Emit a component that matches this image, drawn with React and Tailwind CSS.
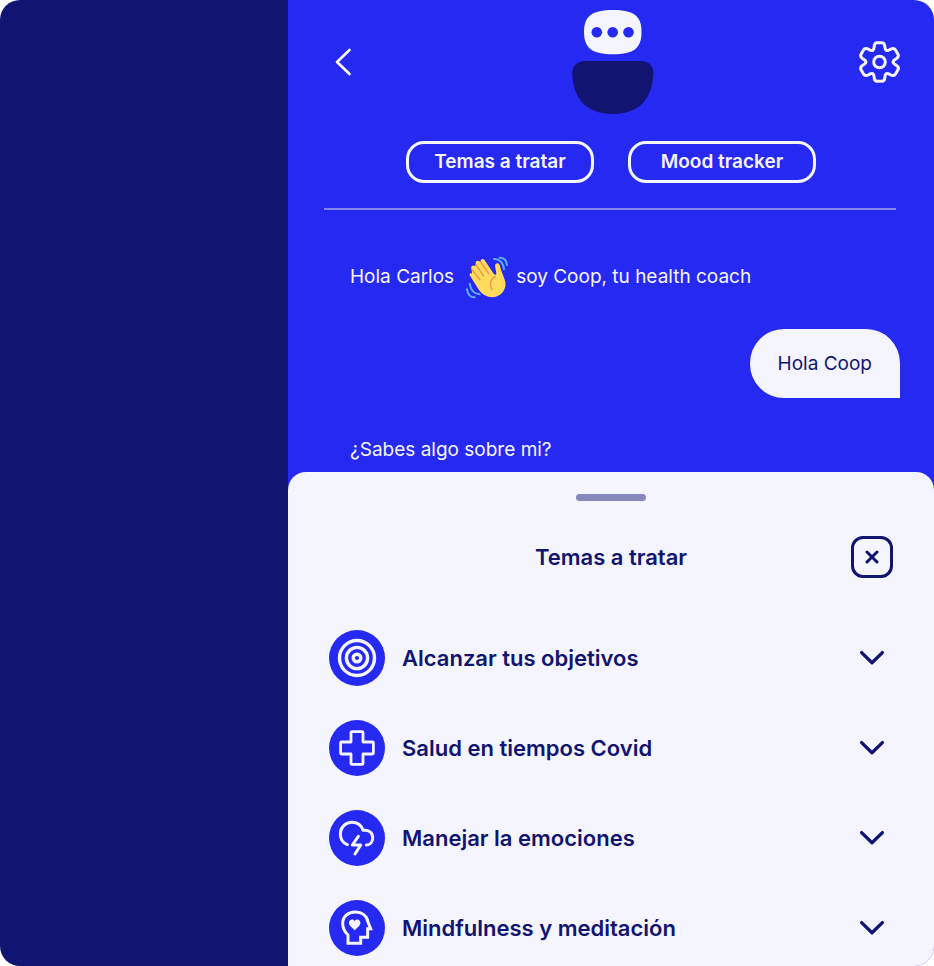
import React from "react";

function BackIcon() {
  return (
    <svg width="42" height="42" viewBox="0 0 42 42" fill="none" stroke="#fff" strokeWidth="2.6" strokeLinecap="round" strokeLinejoin="round" aria-hidden="true">
      <path d="M27.5 9 L15 21 L27.5 33" />
    </svg>
  );
}

function GearIcon() {
  const lobe = "M-6.8 -11.8 C-5.2 -12.8 -5.4 -14 -5.3 -15.6 C-5.2 -18.4 -4.2 -19.3 -2.2 -19.3 H2.2 C4.2 -19.3 5.2 -18.4 5.3 -15.6 C5.4 -14 5.2 -12.8 6.8 -11.8";
  const lobeAtSide = "M-6.8 -11.8 C-5.2 -12.8 -5.6 -14 -5.6 -15.8 C-5.5 -18.8 -4.4 -19.9 -2.4 -19.9 H2.4 C4.4 -19.9 5.5 -18.8 5.6 -15.8 C5.6 -14 5.2 -12.8 6.8 -11.8";
  return (
    <svg width="42" height="44" viewBox="-21.5 -22 42 44" fill="none" stroke="#f5f5ff" strokeWidth="3" strokeLinecap="round" aria-hidden="true">
      <path d={lobe} />
      <path d={lobe} transform="rotate(180)" />
      {[60, 120, 240, 300].map((angle) => (
        <path key={angle} d={lobeAtSide} transform={`rotate(${angle})`} />
      ))}
      <circle r="5.8" />
    </svg>
  );
}

function Robot() {
  return (
    <svg width="88" height="104" viewBox="0 0 88 104" role="img" aria-label="Coop">
      <path d="M46 0 C67 0 74.5 6 74.5 22 C74.5 38 67 44.3 46 44.3 C25 44.3 17 38 17 22 C17 6 25 0 46 0 Z" fill="#f5f5ff" />
      <circle cx="29.8" cy="22.2" r="5.3" fill="#2629f2" />
      <circle cx="45.7" cy="22.2" r="5.3" fill="#2629f2" />
      <circle cx="61.5" cy="22.2" r="5.3" fill="#2629f2" />
      <path d="M18 51 H74 C82 51 86.3 56 86.3 63 C85.5 88 73 104 45.7 104 C18.5 104 6 88 5.2 63 C5.2 56 10 51 18 51 Z" fill="#111470" />
    </svg>
  );
}

function WavingHand() {
  return (
    <svg width="42" height="44" viewBox="30 31 126 132" fill="none" strokeLinecap="round" role="img" aria-label="saludo">
      <path d="M48 87 C43 83 39 88 42 93 L69 136 C82 154 105 163 125 154 C145 145 153 124 146 105 C139 86 134 75 131 61 C128 53 117 55 117 64 L121 86 C121 91 117 92 113 87 L86 47 C82 39 70 44 75 53 L72 51 C66 44 55 50 60 59 L57 64 C50 59 42 66 47 74 Z" fill="#ffdb5e" />
      <g stroke="#ef9645" strokeWidth="4">
        <path d="M48 75 L72 106" />
        <path d="M60 60 L83 94" />
        <path d="M74 52 L98 87" />
        <path d="M118 95 C104 102 99 118 108 135" />
      </g>
      <g stroke="#5dadec" strokeWidth="6">
        <path d="M131 39 C143 38 152 47 153 61" />
        <path d="M114 43 C130 42 143 55 144 74" />
        <path d="M33 134 C35 149 43 158 56 158" />
        <path d="M41 117 C44 135 55 148 71 149" />
      </g>
    </svg>
  );
}

function TargetIcon() {
  return (
    <svg width="56" height="56" viewBox="0 0 56 56" fill="none" stroke="#f5f5ff" strokeWidth="3.4" aria-hidden="true">
      <circle cx="28" cy="28" r="17.5" />
      <circle cx="28" cy="28" r="10.6" />
      <circle cx="28" cy="28" r="3.8" />
    </svg>
  );
}

function CrossIcon() {
  return (
    <svg width="56" height="56" viewBox="0 0 56 56" fill="none" stroke="#f5f5ff" strokeWidth="2.8" strokeLinejoin="round" aria-hidden="true">
      <path d="M23 11.6 H33 Q34 11.6 34 12.6 V22 H43.4 Q44.4 22 44.4 23 V33 Q44.4 34 43.4 34 H34 V43.4 Q34 44.4 33 44.4 H23 Q22 44.4 22 43.4 V34 H12.6 Q11.6 34 11.6 33 V23 Q11.6 22 12.6 22 H22 V12.6 Q22 11.6 23 11.6 Z" />
    </svg>
  );
}

function StormIcon() {
  return (
    <svg width="56" height="56" viewBox="27 27 168 168" fill="none" stroke="#f5f5ff" strokeWidth="9" strokeLinecap="round" strokeLinejoin="round" aria-hidden="true">
      <path d="M82 131 C67 125 61 112 61 99 C61 79 77 64 96 64 C112 64 124 73 129 88 C147 86 158 95 158 110 C158 124 150 132 139 132" />
      <path d="M115 106 L97 132 H122 L105 159" />
    </svg>
  );
}

function HeadIcon() {
  return (
    <svg width="56" height="56" viewBox="27 297 168 168" fill="none" stroke="#f5f5ff" strokeWidth="9" aria-hidden="true">
      <path d="M84 427 V402 C73 391 68 381 68 368 C68 347 84 333 105 333 C126 333 141 345 144 363 L152 383 H143 V409 H122 V427 Z" />
      <path d="M104 388 L90 374 C80 362 95 348 104 360 C113 348 128 362 118 374 Z" fill="#f5f5ff" stroke="none" />
    </svg>
  );
}

function ChevronIcon() {
  return (
    <svg width="26" height="16" viewBox="0 0 26 16" fill="none" stroke="#111470" strokeWidth="3.3" strokeLinecap="round" strokeLinejoin="round" className="shrink-0" aria-hidden="true">
      <path d="M2.6 2.6 L13 12.8 L23.4 2.6" />
    </svg>
  );
}

const topics = [
  { label: "Alcanzar tus objetivos", Icon: TargetIcon },
  { label: "Salud en tiempos Covid", Icon: CrossIcon },
  { label: "Manejar la emociones", Icon: StormIcon },
  { label: "Mindfulness y meditación", Icon: HeadIcon },
];

function PillButton({ children }) {
  return (
    <button type="button" className="h-[42px] w-[188px] rounded-[18px] border-[3px] border-[#f5f5ff] leading-6 font-semibold text-[#f5f5ff]">
      {children}
    </button>
  );
}

export default function App() {
  return (
    <div className="flex min-h-screen overflow-hidden rounded-[20px] font-['Inter','Liberation_Sans',sans-serif] text-[19px] leading-6">
      <aside className="w-72 shrink-0 bg-[#111470]" />
      <main className="flex min-w-0 flex-1 flex-col bg-[#2629f2]">
        <header className="px-[34px] pt-[10px]">
          <div className="flex items-center justify-between">
            <button type="button" aria-label="Volver"><BackIcon /></button>
            <Robot />
            <button type="button" aria-label="Ajustes"><GearIcon /></button>
          </div>
          <div className="mt-[27px] flex justify-center gap-[34px]">
            <PillButton>Temas a tratar</PillButton>
            <PillButton>Mood tracker</PillButton>
          </div>
          <hr className="mt-[25px] mr-1 ml-0.5 border-t-2 border-[#8586fa]" />
        </header>

        <section className="flex flex-col pt-[45px] pr-[34px] pb-[10px] pl-[62px] text-[#f5f5ff]">
          <p className="flex items-center">
            <span>Hola Carlos</span>
            <span className="mr-2 ml-3"><WavingHand /></span>
            <span>soy Coop, tu health coach</span>
          </p>
          <p className="mt-[30px] self-end rounded-t-[34px] rounded-bl-[34px] bg-[#f5f5ff] px-7 pt-[23px] pb-[22px] text-[#111470]">Hola Coop</p>
          <p className="mt-10">¿Sabes algo sobre mi?</p>
        </section>

        <section className="flex flex-1 flex-col rounded-t-[18px] bg-[#f5f5ff] px-[41px] pt-[22px] pb-[10px] text-[#111470]">
          <div className="h-[7px] w-[70px] self-center rounded-full bg-[#8687bd]" />
          <div className="mt-[35px] grid grid-cols-[42px_1fr_42px] items-center">
            <h1 className="col-start-2 text-center text-[22px] leading-8 font-semibold">Temas a tratar</h1>
            <button type="button" aria-label="Cerrar" className="flex h-[42px] w-[42px] items-center justify-center rounded-[12px] border-[3px] border-[#111470]">
              <svg width="14" height="14" viewBox="0 0 14 14" fill="none" stroke="#111470" strokeWidth="3" strokeLinecap="round" aria-hidden="true">
                <path d="M2 2 L12 12 M12 2 L2 12" />
              </svg>
            </button>
          </div>
          <ul className="mt-[52px] flex flex-col gap-[34px]">
            {topics.map(({ label, Icon }) => (
              <li key={label}>
                <button type="button" className="flex w-full items-center pr-2 text-left text-[22px] leading-8 font-semibold">
                  <span className="mr-[17px] shrink-0 rounded-full bg-[#2629f2]"><Icon /></span>
                  <span className="flex-1">{label}</span>
                  <ChevronIcon />
                </button>
              </li>
            ))}
          </ul>
        </section>
      </main>
    </div>
  );
}
